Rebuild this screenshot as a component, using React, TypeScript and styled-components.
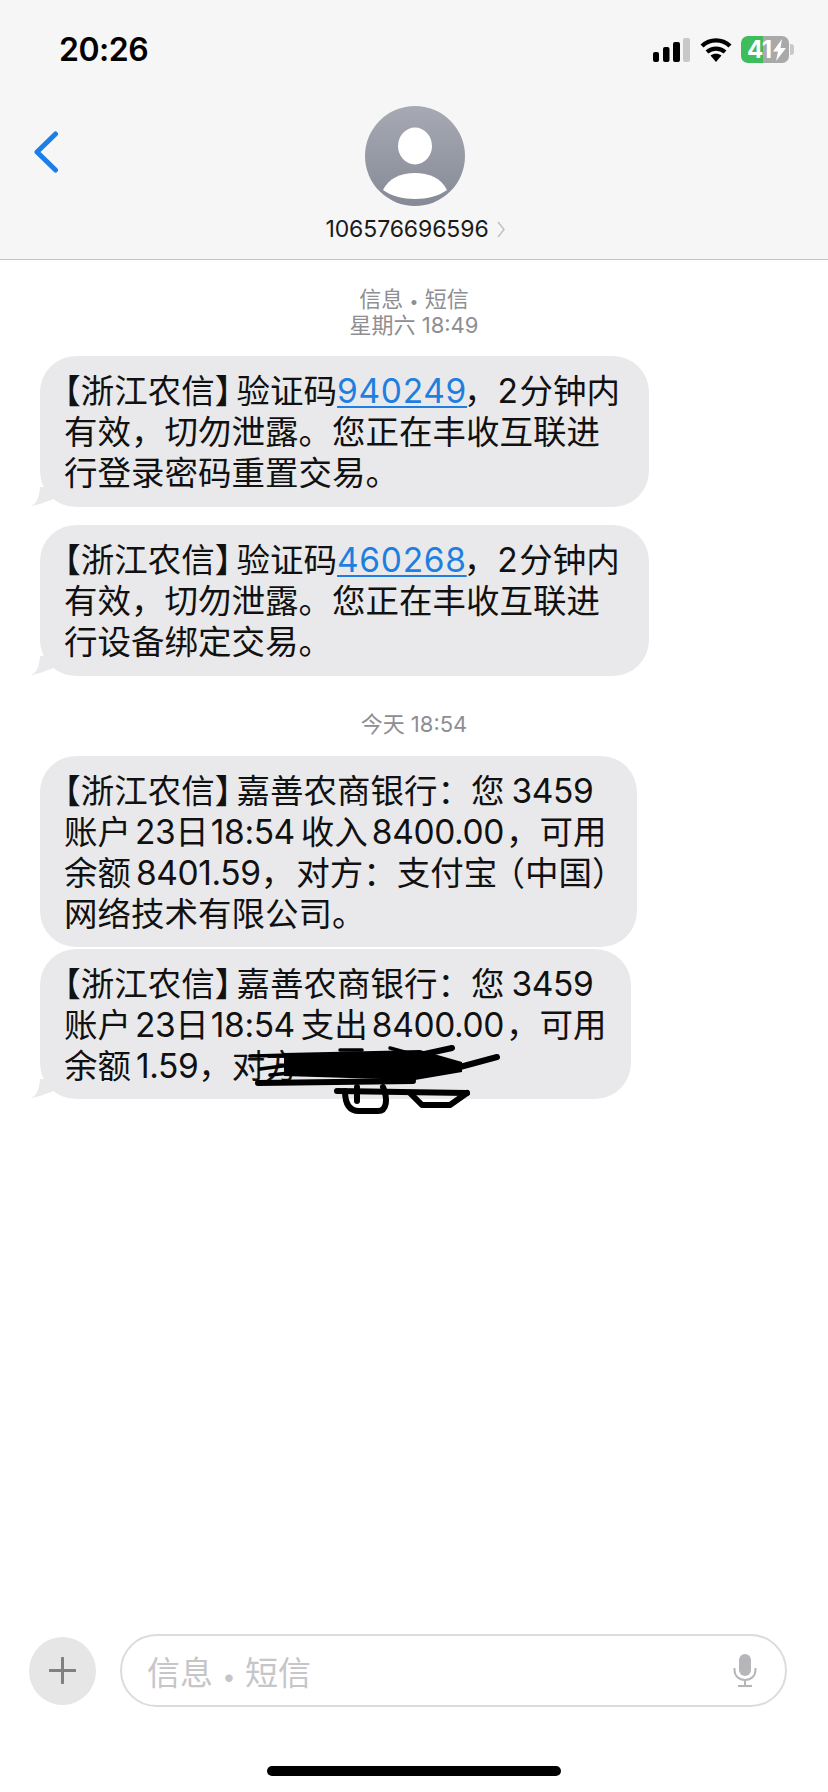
import React from 'react';
import styled, { createGlobalStyle } from 'styled-components';

const GlobalStyle = createGlobalStyle`
  html, body {
    margin: 0;
    padding: 0;
    background: #ffffff;
  }
  * {
    box-sizing: border-box;
  }
`;

const FONT = `Inter, "Noto Sans CJK SC", sans-serif`;

const Page = styled.div`
  width: 828px;
  height: 1792px;
  display: flex;
  flex-direction: column;
  overflow: hidden;
  background: #ffffff;
  font-family: ${FONT};
`;

const Header = styled.header`
  height: 260px;
  flex: none;
  padding: 36px 0 0;
  background: #f6f6f6;
  border-bottom: 1px solid #c4c4c4;
`;

const StatusBar = styled.div`
  height: 27px;
  padding: 0 34px 0 59px;
  display: flex;
  align-items: center;
  justify-content: space-between;
`;

const Clock = styled.div`
  font-size: 32px;
  font-weight: 600;
  color: #000000;
  line-height: 27px;
  letter-spacing: -0.5px;
`;

const StatusIcons = styled.div`
  display: flex;
  align-items: center;
  gap: 9px;
`;

const Battery = styled.div`
  position: relative;
  width: 48px;
  height: 27px;
  border-radius: 7px;
  overflow: hidden;
  display: flex;
  align-items: center;
  padding-left: 6px;
  background: linear-gradient(to right, #3fbc5c 0 22px, #a9a9a9 22px);
  color: #ffffff;
  font-size: 24px;
  font-weight: 700;
  letter-spacing: -0.5px;
`;

const BatteryGroup = styled.div`
  display: flex;
  align-items: center;
  gap: 1px;
`;

const BatteryNub = styled.div`
  width: 4px;
  height: 11px;
  border-radius: 0 3px 3px 0;
  background: #c9c9c9;
`;

const NavBar = styled.div`
  margin-top: 43px;
  padding-left: 33px;
  display: grid;
  grid-template-columns: 332px 100px;
  align-items: start;
`;

const BackButton = styled.div`
  margin-top: 25px;
  height: 42px;
`;

const Contact = styled.div`
  display: flex;
  flex-direction: column;
  align-items: center;
`;

const NumberRow = styled.div`
  margin-top: 9px;
  display: flex;
  align-items: center;
  gap: 8px;
  white-space: nowrap;
  font-size: 23px;
  line-height: 28px;
  letter-spacing: -0.1px;
  color: #1a1a1a;
`;

const Thread = styled.main`
  flex: 1;
  padding: 26px 0 0 40px;
  display: flex;
  flex-direction: column;
  align-items: flex-start;
`;

const Stamp = styled.div<{ $top?: number; $bottom: number }>`
  width: 828px;
  margin-left: -40px;
  margin-top: ${(p) => p.$top ?? 0}px;
  margin-bottom: ${(p) => p.$bottom}px;
  text-align: center;
  color: #8e8e93;
  font-size: 22px;
  line-height: 26px;
`;

const Dot = styled.span`
  font-size: 0.72em;
  line-height: 0;
`;

const Bubble = styled.div<{ $width: number; $gap?: number; $tight?: boolean }>`
  position: relative;
  width: ${(p) => p.$width}px;
  margin-top: ${(p) => p.$gap ?? 0}px;
  padding: 15px 0 ${(p) => (p.$tight ? 12 : 13)}px 24px;
  border-radius: 36px;
  background: #e9e9eb;
  color: #111111;
  font-size: 33.5px;
  line-height: 41px;
  white-space: nowrap;
`;

const Line = styled.div`
  height: 41px;
`;

/* halves the empty side of CJK brackets, the way iOS sets them */
const Bracket = styled.span<{ $before?: number; $after?: number }>`
  font-feature-settings: 'halt';
  margin-left: ${(p) => p.$before ?? 0}px;
  margin-right: ${(p) => p.$after ?? 0}px;
`;

const Num = styled.span<{ $before?: number; $after?: number }>`
  letter-spacing: -0.4px;
  margin-left: ${(p) => p.$before ?? 0}px;
  margin-right: ${(p) => p.$after ?? 0}px;
`;

const Code = styled.span`
  color: #1f7fde;
  letter-spacing: 0.7px;
  text-decoration: underline;
  text-decoration-thickness: 2px;
  text-underline-offset: 3px;
`;

const Comma = styled.span`
  margin-left: -3px;
`;

const Tail = styled.svg`
  position: absolute;
  left: -12px;
  bottom: 0;
`;

const Scribble = styled.svg`
  position: absolute;
  left: 200px;
  top: 90px;
  pointer-events: none;
`;

const Composer = styled.div`
  flex: none;
  padding: 0 41px 0 29px;
  display: flex;
  align-items: center;
  gap: 24px;
`;

const AddButton = styled.div`
  width: 67px;
  height: 68px;
  flex: none;
  border-radius: 50%;
  background: #e6e6e6;
  display: flex;
  align-items: center;
  justify-content: center;
`;

const InputBox = styled.div`
  flex: 1;
  height: 73px;
  padding: 0 28px 0 25px;
  border: 2px solid #dcdcdc;
  border-radius: 37px;
  display: flex;
  align-items: center;
  justify-content: space-between;
  color: #c6c6c8;
  font-size: 33px;
`;

const Placeholder = styled.span``;

const HomeBar = styled.div`
  flex: none;
  width: 294px;
  height: 10px;
  margin: 59px auto 16px;
  border-radius: 5px;
  background: #000000;
`;

const BubbleTail = () => (
  <Tail width="30" height="24" viewBox="0 0 30 24">
    <path d="M0 23.5C6 23 11 19 12 4L28 4L28 15.5C20 17 14 22 0 23.5Z" fill="#e9e9eb" />
  </Tail>
);

const Org = () => (
  <>
    <Bracket>【</Bracket>浙江农信<Bracket $after={5}>】</Bracket>
  </>
);

const App: React.FC = () => (
  <Page>
    <GlobalStyle />
    <Header>
      <StatusBar>
        <Clock>20:26</Clock>
        <StatusIcons>
          <svg width="38" height="24" viewBox="0 0 38 24">
            <rect x="0" y="14" width="6" height="10" rx="2" fill="#000" />
            <rect x="10" y="9" width="6.5" height="15" rx="2" fill="#000" />
            <rect x="20" y="4" width="7" height="20" rx="2" fill="#000" />
            <rect x="30" y="0" width="7" height="24" rx="2" fill="#c8c8c8" />
          </svg>
          <svg width="32" height="24" viewBox="0 0 32 24">
            <path d="M16 24l-5.500-6.500c3-2.500 8-2.500 11 0z" fill="#000" />
            <path d="M7 14c5.200-4.500 12.800-4.500 18 0" fill="none" stroke="#000" strokeWidth="4.200" />
            <path d="M2 8c8-7.500 20-7.500 28 0" fill="none" stroke="#000" strokeWidth="4.400" />
          </svg>
          <BatteryGroup>
            <Battery>
              41
              <svg width="15" height="22" viewBox="0 0 15 22">
                <path d="M10 0L1 12.500h5L4 22l10-13H8.500z" fill="#ffffff" />
              </svg>
            </Battery>
            <BatteryNub />
          </BatteryGroup>
        </StatusIcons>
      </StatusBar>
      <NavBar>
        <BackButton>
          <svg width="26" height="42" viewBox="0 0 26 42">
            <path d="M22.500 3L4 21l18.500 18" fill="none" stroke="#1a7fe8" strokeWidth="5" strokeLinecap="round" strokeLinejoin="round" />
          </svg>
        </BackButton>
        <Contact>
          <svg width="100" height="100" viewBox="0 0 100 100">
            <defs>
              <linearGradient id="avatarFill" x1="0" y1="0" x2="0" y2="1">
                <stop offset="0" stopColor="#a7aab4" />
                <stop offset="1" stopColor="#868a96" />
              </linearGradient>
            </defs>
            <circle cx="50" cy="50" r="50" fill="url(#avatarFill)" />
            <ellipse cx="50" cy="40" rx="17" ry="18.500" fill="#ffffff" />
            <path d="M18 84C24 72 36 67 50 67S76 72 82 84C74 90 62 93 50 93S26 90 18 84Z" fill="#ffffff" />
          </svg>
          <NumberRow>
            106576696596
            <svg width="8" height="17" viewBox="0 0 8 17">
              <path d="M1 1l6 7.500-6 7.500" fill="none" stroke="#c2c2c4" strokeWidth="1.500" />
            </svg>
          </NumberRow>
        </Contact>
      </NavBar>
    </Header>

    <Thread>
      <Stamp $bottom={18}>
        信息 <Dot>•</Dot> 短信
        <br />
        星期六 18:49
      </Stamp>
      <Bubble $width={609}>
        <Line>
          <Org />验证码<Code>940249</Code><Comma>，</Comma><Num $after={2}>2</Num>分钟内
        </Line>
        <Line>有效，切勿泄露。您正在丰收互联进</Line>
        <Line>行登录密码重置交易。</Line>
        <BubbleTail />
      </Bubble>
      <Bubble $width={609} $gap={18}>
        <Line>
          <Org />验证码<Code>460268</Code><Comma>，</Comma><Num $after={2}>2</Num>分钟内
        </Line>
        <Line>有效，切勿泄露。您正在丰收互联进</Line>
        <Line>行设备绑定交易。</Line>
        <BubbleTail />
      </Bubble>
      <Stamp $top={35} $bottom={19}>
        今天 18:54
      </Stamp>
      <Bubble $width={597} $tight>
        <Line>
          <Org />嘉善农商银行：您<Num $before={7}>3459</Num>
        </Line>
        <Line>
          账户<Num $before={4}>23</Num>日<Num $before={2} $after={6}>18:54</Num>收入<Num $before={4} $after={2}>8400.00</Num>，可用
        </Line>
        <Line>
          余额<Num $before={5}>8401.59</Num>，<Num $before={2} />对方：支付宝<Bracket $before={11}>（</Bracket>中国<Bracket>）</Bracket>
        </Line>
        <Line>网络技术有限公司。</Line>
      </Bubble>
      <Bubble $width={591} $gap={2} $tight>
        <Line>
          <Org />嘉善农商银行：您<Num $before={7}>3459</Num>
        </Line>
        <Line>
          账户<Num $before={4}>23</Num>日<Num $before={2} $after={6}>18:54</Num>支出<Num $before={4} $after={2}>8400.00</Num>，可用
        </Line>
        <Line>
          余额<Num $before={5}>1.59</Num>，对方
        </Line>
        <BubbleTail />
        <Scribble width="270" height="80" viewBox="0 0 270 80">
          <path d="M44 14L180 11L222 23L222 33L175 41L44 37Z" fill="#000" />
          <g fill="none" stroke="#000" strokeWidth="6" strokeLinecap="round" strokeLinejoin="round">
            <path d="M180 16L212 9" />
            <path d="M220 28L257 18" />
            <path d="M18 44L173 42" />
            <path d="M97 52L227 54" />
            <path d="M105 52C105 64 109 72 119 72L138 72C147 72 148 60 143 48" />
            <path d="M117 48L117 62" />
            <path d="M170 54L182 66L210 66L227 54" />
          </g>
          <g fill="none" stroke="#000" strokeWidth="3.500" strokeLinecap="round">
            <path d="M10 17L50 16" />
            <path d="M20 30L50 26" />
            <path d="M30 36L50 34" />
            <path d="M100 11L122 11" />
            <path d="M150 9L168 14" />
          </g>
        </Scribble>
      </Bubble>
    </Thread>

    <Composer>
      <AddButton>
        <svg width="27" height="27" viewBox="0 0 27 27">
          <path d="M13.500 1V26M1 13.500H26" stroke="#808080" strokeWidth="3" strokeLinecap="round" />
        </svg>
      </AddButton>
      <InputBox>
        <Placeholder>
          信息 <Dot>•</Dot> 短信
        </Placeholder>
        <svg width="24" height="33" viewBox="0 0 24 33">
          <rect x="6" y="0" width="12" height="22" rx="6" fill="#b5b5ba" />
          <path d="M1.500 14V16C1.500 22 6 26 12 26S22.500 22 22.500 16V14M12 26V31M5 32H19" fill="none" stroke="#b5b5ba" strokeWidth="2" />
        </svg>
      </InputBox>
    </Composer>
    <HomeBar />
  </Page>
);

export default App;
